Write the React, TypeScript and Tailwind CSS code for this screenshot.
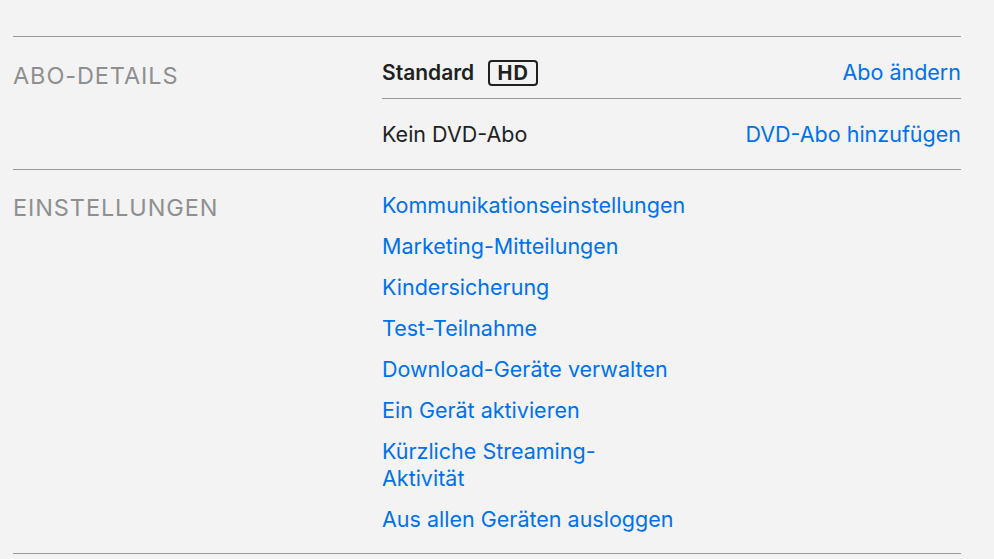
const links = [
  "Kommunikationseinstellungen",
  "Marketing-Mitteilungen",
  "Kindersicherung",
  "Test-Teilnahme",
  "Download-Geräte verwalten",
  "Ein Gerät aktivieren",
  "Kürzliche Streaming-Aktivität",
  "Aus allen Geräten ausloggen",
];

const font = { fontFamily: "Inter, 'Liberation Sans', sans-serif" };

export default function App() {
  return (
    <div className="w-[994px] h-[559px] overflow-hidden bg-[#f3f3f3] pt-[36px]" style={font}>
      <div className="ml-[13px] w-[948px]">
        {/* Abo-Details */}
        <div className="flex border-t border-[#999]">
          <div className="w-[369px] pt-[25px] text-[23.5px] leading-[27px] text-[#8f8f8f] tracking-[0.9px]">
            ABO-DETAILS
          </div>
          <div className="flex-1">
            <div className="flex h-[62px] items-start justify-between border-b border-[#999] pt-[22px]">
              <div className="flex items-center gap-[14px]">
                <span className="text-[21px] leading-[27px] font-semibold text-[#221f1f]">Standard</span>
                <span className="flex h-[26px] w-[50px] items-center justify-center rounded-[4px] border-2 border-[#221f1f] text-[20px] font-bold leading-none tracking-[1px] text-[#221f1f]">
                  HD
                </span>
              </div>
              <a className="text-[21.5px] leading-[27px] text-[#0071eb]">Abo ändern</a>
            </div>
            <div className="flex h-[70px] items-start justify-between pt-[22px]">
              <span className="text-[21.5px] leading-[27px] text-[#221f1f]">Kein DVD-Abo</span>
              <a className="text-[21.5px] leading-[27px] text-[#0071eb]">DVD-Abo hinzufügen</a>
            </div>
          </div>
        </div>

        {/* Einstellungen */}
        <div className="flex border-t border-b border-[#999] pt-[22px] pb-[20px]">
          <div className="w-[369px] pt-[2px] text-[23.5px] leading-[27px] text-[#8f8f8f] tracking-[0.9px]">
            EINSTELLUNGEN
          </div>
          <div className="flex flex-col gap-[14px]">
            {links.map((l) => (
              <a
                key={l}
                className={
                  l.startsWith("Kürzliche")
                    ? "w-[240px] text-[21.5px] leading-[27px] text-[#0071eb]"
                    : "text-[21.5px] leading-[27px] text-[#0071eb]"
                }
              >
                {l}
              </a>
            ))}
          </div>
        </div>
      </div>
    </div>
  );
}
